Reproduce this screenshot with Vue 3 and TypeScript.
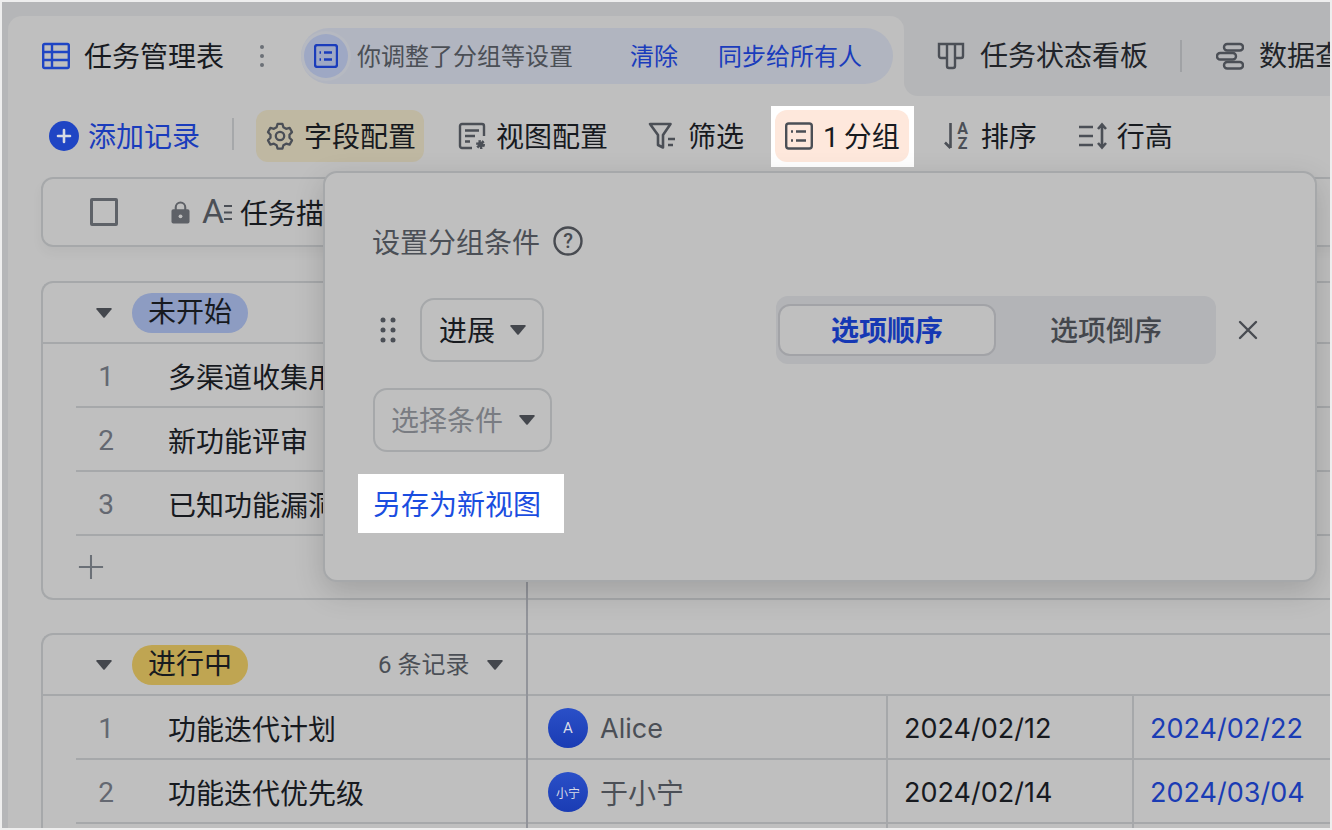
<script setup lang="ts">
interface Row { no: number; name: string; owner?: string; badge?: string; start?: string; end?: string }
interface Group { label: string; tone: string; count: string; rows: Row[]; add: boolean }

const groups: Group[] = [
  {
    label: '未开始', tone: 'blue', count: '', add: true,
    rows: [
      { no: 1, name: '多渠道收集用' },
      { no: 2, name: '新功能评审' },
      { no: 3, name: '已知功能漏洞' },
    ],
  },
  {
    label: '进行中', tone: 'yellow', count: '6 条记录', add: false,
    rows: [
      { no: 1, name: '功能迭代计划', owner: 'Alice', badge: 'A', start: '2024/02/12', end: '2024/02/22' },
      { no: 2, name: '功能迭代优先级', owner: '于小宁', badge: '小宁', start: '2024/02/14', end: '2024/03/04' },
      { no: 3, name: '' },
    ],
  },
]
</script>

<template>
  <div class="frame">
    <div class="shell">
      <header class="tabs">
        <div class="tab-active">
          <svg class="ic28" viewBox="0 0 28 28" fill="none" stroke="#1f45c4" stroke-width="2.400"><rect x="1.200" y="2" width="25.600" height="24" rx="1.500"/><path d="M1 10h26M1 18h26M10 2v24"/></svg>
          <span class="tab-title">任务管理表</span>
          <svg class="more" viewBox="0 0 6 24" fill="#6b7077"><circle cx="3" cy="3" r="2"/><circle cx="3" cy="12" r="2"/><circle cx="3" cy="21" r="2"/></svg>
          <div class="notice">
            <span class="notice-badge">
              <svg class="ic24" viewBox="0 0 24 24" fill="none" stroke="#1a3cbc" stroke-width="2.400"><rect x="1" y="1" width="22" height="22" rx="2.500"/><path d="M10 8.500h8M10 15.500h8M5.500 8.500h1.500M5.500 15.500h1.500"/></svg>
            </span>
            <span class="notice-text">你调整了分组等设置</span>
            <a class="notice-link first">清除</a>
            <a class="notice-link second">同步给所有人</a>
          </div>
        </div>
        <div class="tab-rest">
          <svg class="ic28" viewBox="0 0 28 28" fill="none" stroke="#4b4f56" stroke-width="2.400"><path d="M2 2h24v12a2 2 0 0 1-2 2h-6v8a2 2 0 0 1-2 2h-4a2 2 0 0 1-2-2v-8H4a2 2 0 0 1-2-2zM10 2v14M18 2v14"/></svg>
          <span class="tab-name">任务状态看板</span>
          <i class="tab-sep"></i>
          <svg class="ic28" viewBox="0 0 28 28" fill="none" stroke="#4b4f56" stroke-width="2.400"><rect x="8" y="2" width="19" height="6.500" rx="3.200"/><rect x="1" y="11" width="19" height="6.500" rx="3.200"/><rect x="8" y="20" width="19" height="6.500" rx="3.200"/></svg>
          <span class="tab-name">数据查询表</span>
        </div>
      </header>

      <section class="toolbar">
        <button class="add">
          <svg class="add-ic" viewBox="0 0 30 30"><circle cx="15" cy="15" r="15" fill="#1f45c4"/><path d="M15 9v12M9 15h12" stroke="#d8dbe4" stroke-width="2.600" stroke-linecap="round"/></svg>
          添加记录
        </button>
        <i class="tool-sep"></i>
        <button class="tool field">
          <svg class="ic28" viewBox="0 0 28 28" fill="none" stroke="#4b4f56" stroke-width="2.300" stroke-linejoin="round"><path d="M11.600 1.800h4.800l1 3.500 2.700 1.500 3.500-.9 2.400 4.200-2.500 2.600v3.100l2.500 2.600-2.400 4.200-3.500-.9-2.700 1.500-1 3.500h-4.800l-1-3.500-2.700-1.500-3.500.9-2.400-4.200 2.500-2.600v-3.100L2 10.100l2.400-4.200 3.500.9 2.700-1.500z"/><circle cx="14" cy="14" r="4.200"/></svg>
          字段配置
        </button>
        <button class="tool view">
          <svg class="ic28" viewBox="0 0 28 28" fill="none" stroke="#4b4f56" stroke-width="2.400"><path d="M14 26H4a2 2 0 0 1-2-2V4a2 2 0 0 1 2-2h20a2 2 0 0 1 2 2v10"/><path d="M7 8.500h14M7 14h10M7 19.500h5"/><circle cx="22.500" cy="22.500" r="3" fill="#4b4f56" stroke-width="3" stroke-dasharray="2 1"/></svg>
          视图配置
        </button>
        <button class="tool filter">
          <svg class="ic28" viewBox="0 0 28 28" fill="none" stroke="#4b4f56" stroke-width="2.600" stroke-linejoin="round"><path d="M2 2h20.500l-7.500 11v12.500l-5-2.500v-10z"/><path d="M20 17h7M20 23h5"/></svg>
          筛选
        </button>
        <div class="spot">
          <button class="tool group">
            <svg class="ic28" viewBox="0 0 28 28" fill="none" stroke="#4b4f56" stroke-width="2.400"><rect x="1.200" y="1.500" width="25.600" height="25" rx="2.500"/><path d="M11 9.500h10M11 18.500h10M6 9.500h2M6 18.500h2"/></svg>
            1 分组
          </button>
        </div>
        <button class="tool sort">
          <svg class="ic28 letters" viewBox="0 0 28 28" fill="none" stroke="#4b4f56" stroke-width="2.600"><path d="M6.500 1v25M1 20.500l5.500 5.500"/><text x="18.500" y="12" class="ic-letter" text-anchor="middle">A</text><text x="18.500" y="27" class="ic-letter" text-anchor="middle">Z</text></svg>
          排序
        </button>
        <button class="tool height">
          <svg class="ic30" viewBox="0 0 30 28" fill="none" stroke="#4b4f56" stroke-width="2.600"><path d="M1 5h14M1 14h14M1 23h14M24 3v22M20 7l4-4.500 4 4.500M20 21l4 4.500 4-4.500"/></svg>
          行高
        </button>
      </section>

      <main class="board">
        <div class="table-head">
          <span class="check"></span>
          <svg class="lock" viewBox="0 0 20 24"><path d="M5 10V7a5 5 0 0 1 10 0v3" fill="none" stroke="#5e6167" stroke-width="2.200"/><rect x="0.500" y="9" width="19" height="15" rx="2" fill="#5e6167"/><circle cx="10" cy="16.500" r="2" fill="#bfbfbf"/></svg>
          <svg class="text-ic letters" viewBox="0 0 32 28" fill="none" stroke="#4b4f56" stroke-width="2.200"><text x="0" y="25" class="ic-big">A</text><path d="M22 8h8M22 14.500h8M22 21h8"/></svg>
          <span class="head-title">任务描述</span>
        </div>

        <article v-for="g in groups" :key="g.label" class="group-card">
          <div class="group-head">
            <svg class="caret group-caret" viewBox="0 0 16 10"><path d="M1 0h14a.8.8 0 0 1 .6 1.300L8.700 9.500a1 1 0 0 1-1.400 0L.4 1.300A.8.8 0 0 1 1 0z" fill="#44474d"/></svg>
            <span class="pill" :class="g.tone">{{ g.label }}</span>
            <template v-if="g.count">
              <span class="count">{{ g.count }}</span>
              <svg class="caret" viewBox="0 0 16 10"><path d="M1 0h14a.8.8 0 0 1 .6 1.300L8.700 9.500a1 1 0 0 1-1.400 0L.4 1.300A.8.8 0 0 1 1 0z" fill="#44474d"/></svg>
            </template>
          </div>
          <div v-for="r in g.rows" :key="r.no" class="row">
            <div class="cell-main">
              <template v-if="r.name">
                <span class="no">{{ r.no }}</span>
                <span class="name">{{ r.name }}</span>
              </template>
            </div>
            <template v-if="r.owner">
              <div class="cell-owner">
                <span class="avatar" :class="{ small: r.badge && r.badge.length > 1 }">{{ r.badge }}</span>
                <span class="owner" :class="{ cjk: r.badge && r.badge.length > 1 }">{{ r.owner }}</span>
              </div>
              <div class="cell-date">{{ r.start }}</div>
              <div class="cell-date end">{{ r.end }}</div>
            </template>
            <template v-else-if="g.add === false">
              <div class="cell-owner"></div>
              <div class="cell-date"></div>
              <div class="cell-date end"></div>
            </template>
          </div>
          <div v-if="g.add" class="add-row">
            <svg class="plus" viewBox="0 0 28 28"><path d="M14 1v26M1 14h26" stroke="#6b7077" stroke-width="2.200"/></svg>
          </div>
        </article>
        <i class="freeze"></i>
      </main>

      <aside class="popup">
        <div class="pop-title">
          <span class="pop-heading">设置分组条件</span>
          <svg class="help" viewBox="0 0 30 30"><circle cx="15" cy="15" r="13.500" fill="none" stroke="#484b51" stroke-width="2.400"/><text x="15" y="21.500" text-anchor="middle" class="help-mark">?</text></svg>
        </div>
        <div class="pop-row">
          <svg class="drag" viewBox="0 0 16 26" fill="#4b4f56"><circle cx="3" cy="3" r="2.500"/><circle cx="13" cy="3" r="2.500"/><circle cx="3" cy="13" r="2.500"/><circle cx="13" cy="13" r="2.500"/><circle cx="3" cy="23" r="2.500"/><circle cx="13" cy="23" r="2.500"/></svg>
          <div class="select field-select">
            <span>进展</span>
            <svg class="caret" viewBox="0 0 16 10"><path d="M1 0h14a.8.8 0 0 1 .6 1.300L8.700 9.500a1 1 0 0 1-1.400 0L.4 1.300A.8.8 0 0 1 1 0z" fill="#44474d"/></svg>
          </div>
          <div class="segment">
            <span class="seg on">选项顺序</span>
            <span class="seg">选项倒序</span>
          </div>
          <svg class="close" viewBox="0 0 20 20"><path d="M2 2l16 16M18 2L2 18" stroke="#484b51" stroke-width="2.400" stroke-linecap="round"/></svg>
        </div>
        <div class="select cond-select">
          <span>选择条件</span>
          <svg class="caret" viewBox="0 0 16 10"><path d="M1 0h14a.8.8 0 0 1 .6 1.300L8.700 9.500a1 1 0 0 1-1.400 0L.4 1.300A.8.8 0 0 1 1 0z" fill="#44474d"/></svg>
        </div>
        <a class="save-link">另存为新视图</a>
      </aside>
    </div>
  </div>
</template>

<style scoped>
.frame {
  width: 1332px;
  height: 830px;
  box-sizing: border-box;
  padding: 2px;
  background: #eeeeee;
  overflow: hidden;
  font-family: Roboto, "Noto Sans CJK SC", sans-serif;
  font-size: 28px;
  color: #171a1f;
}
.shell {
  position: relative;
  height: 100%;
  padding-left: 6px;
  box-sizing: border-box;
  background: #b5b6b8;
  overflow: hidden;
  display: flex;
  flex-direction: column;
}
svg { display: block; flex: none; }
button {
  font: inherit;
  color: inherit;
  border: 0;
  background: none;
  padding: 0;
  display: flex;
  align-items: center;
}
.ic28 { width: 28px; height: 28px; }
.ic24 { width: 24px; height: 24px; }
.ic30 { width: 30px; height: 28px; }
.letters { overflow: visible; }
.ic-letter { font: 700 16px Roboto, sans-serif; fill: #4b4f56; stroke: none; }
.ic-big { font: 400 34px Roboto, sans-serif; fill: #4b4f56; stroke: none; }

.tabs {
  display: flex;
  height: 94px;
  flex: none;
  background: linear-gradient(#b5b6b8, #b5b6b8) top / 100% 50px no-repeat, #bfbfbf;
}
.tab-active {
  width: 896px;
  margin-top: 14px;
  padding-left: 34px;
  box-sizing: border-box;
  display: flex;
  align-items: center;
  background: #bfbfbf;
  border-radius: 14px 14px 0 0;
}
.tab-title { margin-left: 14px; line-height: 40px; padding-top: 3px; }
.more { width: 6px; height: 24px; margin-left: 35px; }
.notice {
  margin-left: 36px;
  width: 592px;
  height: 56px;
  box-sizing: border-box;
  padding-left: 3px;
  border-radius: 28px;
  background: #b1b5c0;
  display: flex;
  align-items: center;
  font-size: 24px;
}
.notice-badge {
  width: 44px;
  height: 44px;
  border-radius: 50%;
  background: #9ea8c4;
  display: flex;
  align-items: center;
  justify-content: center;
  box-shadow: 0 0 0 3px #b6b9c1;
}
.notice-text { margin: 0 0 4px 9px; color: #4b4f56; }
.notice-link { color: #1a3cbc; margin-bottom: 4px; }
.first { margin-left: 57px; }
.second { margin-left: 40px; }
.tab-rest {
  flex: 1;
  min-width: 0;
  background: #b5b6b8;
  border-radius: 0 0 0 14px;
  display: flex;
  align-items: center;
  padding: 14px 0 0 33px;
  box-sizing: border-box;
  white-space: nowrap;
  overflow: hidden;
}
.tab-name { margin: 0 0 4px 15px; color: #212429; }
.tab-sep { width: 2px; height: 32px; margin: 0 34px 0 32px; background: #a0a2a5; flex: none; }

.toolbar {
  flex: none;
  height: 81px;
  padding: 14px 0 0 41px;
  box-sizing: border-box;
  display: flex;
  align-items: flex-start;
  background: #bfbfbf;
  white-space: nowrap;
}
.add { height: 52px; color: #1a3cbc; gap: 9px; padding-bottom: 2px; }
.add-ic { width: 30px; height: 30px; margin-top: 2px; }
.tool-sep { width: 2px; height: 32px; margin: 8px 22px 0 32px; background: #a6a8aa; flex: none; }
.tool { height: 52px; padding: 0 10px 2px; gap: 10px; border-radius: 12px; }
.tool svg { margin-top: 2px; }
.field { background: #bfb8a2; padding-right: 8px; }
.view { margin-left: 24px; gap: 10px; }
.filter { margin-left: 20px; gap: 12px; }
.spot {
  margin: -4px 0 0 17px;
  padding: 4px 5px 5px 4px;
  background: #ffffff;
}
.group { background: #fee8dc; word-spacing: -2px; padding-right: 9px; }
.sort { margin-left: 20px; gap: 9px; }
.height { margin-left: 21px; gap: 9px; }

.board {
  position: relative;
  flex: 1;
  min-height: 0;
  background: #bfbfbf;
  padding-left: 33px;
  overflow: hidden;
}
.table-head {
  height: 70px;
  box-sizing: border-box;
  margin-right: -20px;
  border: 2px solid #a6a8aa;
  border-radius: 12px;
  display: flex;
  align-items: center;
  padding-left: 47px;
  box-shadow: 0 6px 12px rgba(0, 0, 0, 0.04);
  white-space: nowrap;
}
.check {
  width: 28px;
  height: 28px;
  box-sizing: border-box;
  border: 3px solid #5e6268;
  border-radius: 2px;
  flex: none;
}
.lock { width: 19px; height: 24px; margin-left: 53px; }
.text-ic { width: 32px; height: 28px; margin-left: 12px; }
.head-title { margin-left: 6px; }

.group-card {
  margin: 34px -20px 0 0;
  border: 2px solid #a6a8aa;
  border-right: 0;
  border-radius: 12px 0 0 12px;
}
.group-card + .group-card { margin-top: 33px; }
.group-head {
  height: 59px;
  display: flex;
  align-items: center;
  border-bottom: 2px solid #a6a8aa;
}
.caret { width: 16px; height: 10px; }
.group-caret { margin-left: 53px; }
.pill {
  margin-left: 20px;
  height: 40px;
  width: 116px;
  border-radius: 20px;
  text-align: center;
  line-height: 40px;
}
.pill.blue { background: #8d9cc2; }
.pill.yellow { background: #bfa552; }
.count {
  margin: 0 18px 5px 130px;
  font-size: 24px;
  color: #4b4f56;
  white-space: nowrap;
}
.row {
  display: grid;
  grid-template-columns: 483px 360px 246px 1fr;
  height: 64px;
  position: relative;
  align-items: stretch;
}
.row::after {
  content: "";
  position: absolute;
  left: 33px;
  right: 0;
  bottom: 0;
  height: 2px;
  background: #a6a8aa;
}
.cell-main { display: flex; align-items: center; }
.no { width: 18px; margin-left: 54px; text-align: center; color: #646871; flex: none; }
.name { margin-left: 53px; white-space: nowrap; }
.cell-owner { display: flex; align-items: center; padding-left: 22px; }
.avatar {
  width: 40px;
  height: 40px;
  border-radius: 50%;
  background: linear-gradient(#2a50c8, #1a3cb4);
  color: #d9dce6;
  font-size: 15px;
  display: flex;
  align-items: center;
  justify-content: center;
  flex: none;
}
.avatar.small { font-size: 12px; }
.owner { margin-left: 12px; color: #4b4f56; font-family: Inter, "Noto Sans CJK SC", sans-serif; font-size: 27px; }
.owner.cjk { font-size: 28px; }
.cell-date {
  border-left: 2px solid #a6a8aa;
  padding-left: 16px;
  display: flex;
  align-items: center;
  color: #171a1f;
  font-family: Inter, sans-serif;
  font-size: 27px;
}
.cell-date.end { color: #1a3cb4; }
.add-row { height: 62px; display: flex; align-items: center; padding-left: 35px; }
.plus { width: 26px; height: 26px; }
.freeze {
  position: absolute;
  left: 518px;
  top: 104px;
  bottom: 0;
  width: 2px;
  background: #92949a;
}

.popup {
  position: absolute;
  left: 321px;
  top: 169px;
  width: 994px;
  height: 411px;
  box-sizing: border-box;
  padding: 53px 0 0 48px;
  border: 2px solid #a6a8aa;
  border-radius: 14px;
  background: #bfbfbf;
  box-shadow: 0 10px 30px rgba(0, 0, 0, 0.16);
}
.pop-title {
  display: flex;
  align-items: center;
  height: 30px;
  gap: 13px;
  color: #4b4f56;
}
.pop-heading { margin-left: -1px; }
.help { width: 30px; height: 30px; }
.help-mark { font: 500 20px Roboto, sans-serif; fill: #484b51; }
.pop-row {
  margin-top: 40px;
  height: 68px;
  padding-left: 7px;
  display: flex;
  align-items: center;
}
.drag { width: 16px; height: 26px; }
.select {
  height: 64px;
  box-sizing: border-box;
  border: 2px solid #a6a8aa;
  border-radius: 14px;
  display: flex;
  align-items: center;
}
.select span { margin-bottom: 2px; }
.field-select { width: 124px; margin-left: 24px; padding-left: 17px; gap: 15px; flex: none; }
.segment {
  margin-left: 232px;
  width: 440px;
  height: 68px;
  box-sizing: border-box;
  padding: 8px 0 8px 2px;
  border-radius: 12px;
  background: #b3b4b7;
  display: flex;
  flex: none;
}
.seg {
  width: 216px;
  height: 52px;
  box-sizing: border-box;
  display: flex;
  align-items: center;
  justify-content: center;
  padding-bottom: 2px;
  font-weight: 500;
  color: #44474d;
  border: 2px solid transparent;
  border-radius: 12px;
}
.seg.on { width: 218px; background: #bfbfbf; border-color: #a2a3a7; color: #1538b4; font-weight: 700; }
.seg:last-child { margin-left: 2px; }
.close { width: 20px; height: 20px; margin-left: 22px; }
.cond-select {
  width: 179px;
  margin-top: 24px;
  padding-left: 16px;
  gap: 16px;
  color: #797c82;
}
.save-link {
  display: block;
  width: fit-content;
  margin: 22px 0 0 -15px;
  box-sizing: border-box;
  height: 59px;
  padding: 3px 23px 0 15px;
  line-height: 58px;
  background: #ffffff;
  color: #1a4de0;
}
</style>
